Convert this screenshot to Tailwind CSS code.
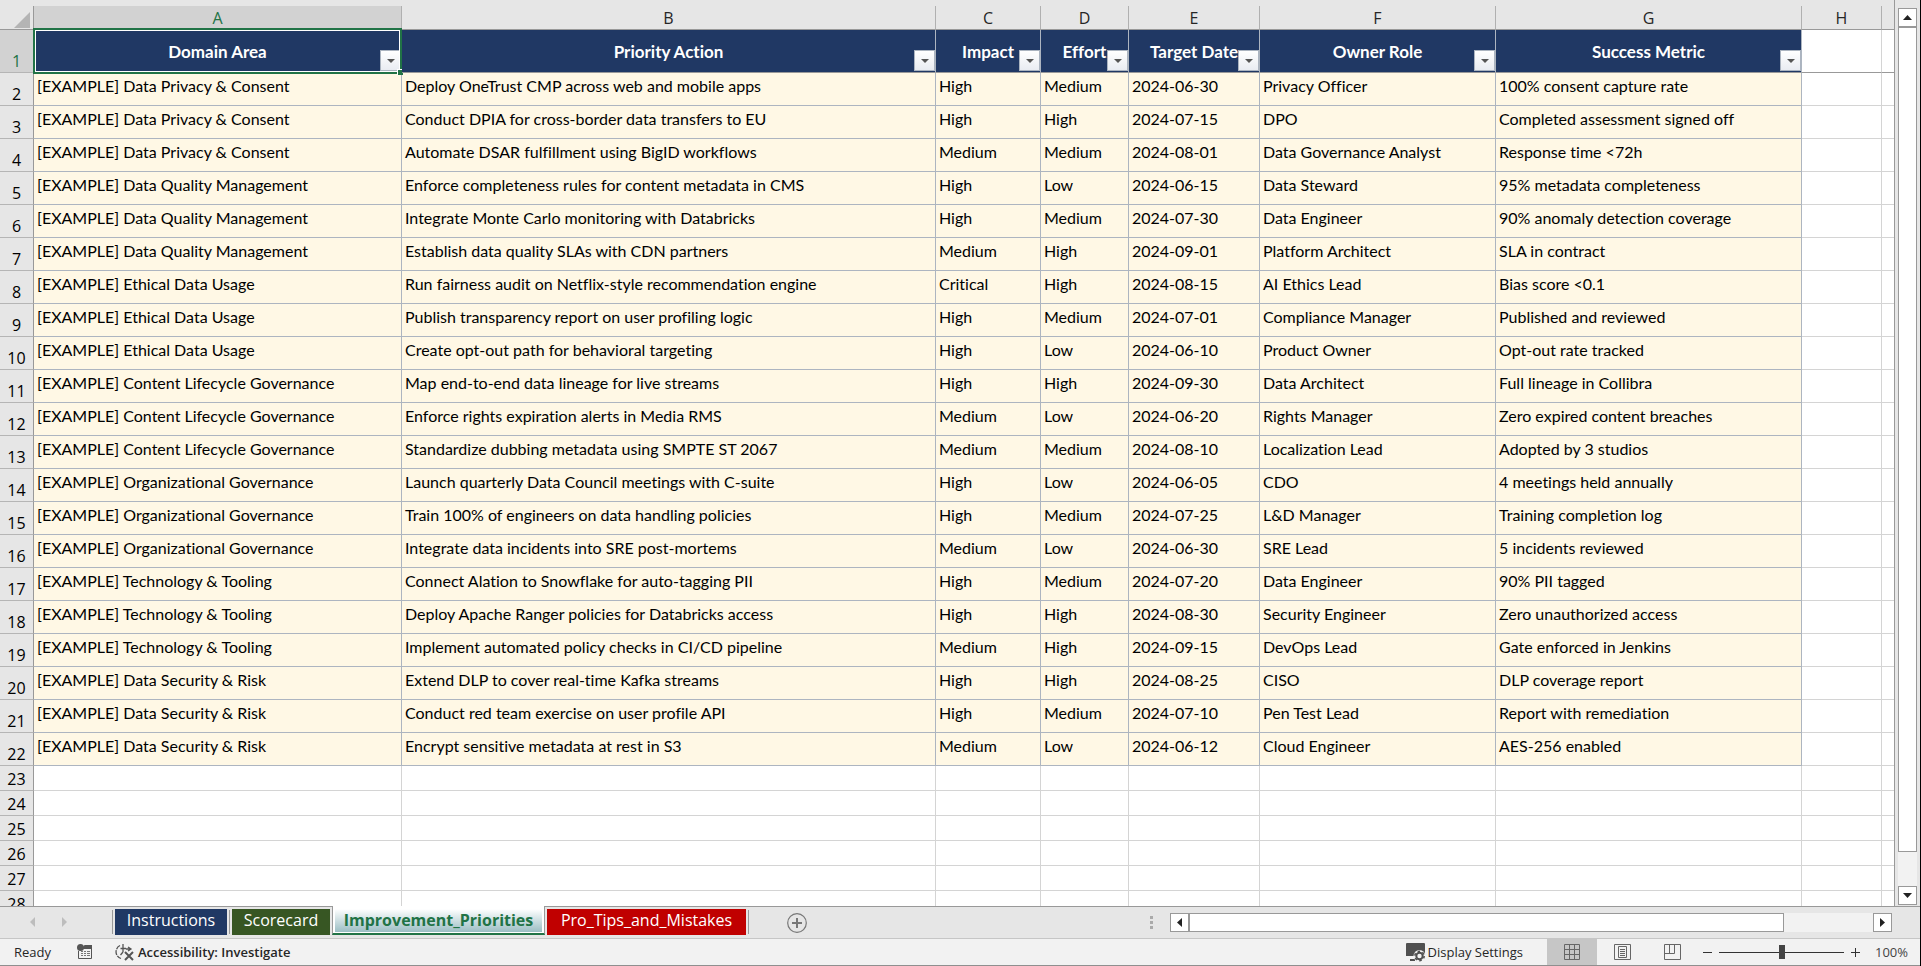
<!DOCTYPE html>
<html lang="en">
<head>
    <meta charset="UTF-8">
    <meta name="viewport" content="width=device-width, initial-scale=1.0">
    <title>Improvement Priorities</title>
    <script src="https://cdn.jsdelivr.net/npm/@tailwindcss/browser@4"></script>
</head>
<body class="h-screen flex flex-col overflow-hidden bg-[#e6e6e6] border-r border-black font-['Open_Sans',sans-serif] text-[#262626]">

    <!-- Sheet + vertical scrollbar -->
    <main class="flex-1 min-h-0 flex">
        <div class="flex-1 min-w-0 overflow-hidden pt-[6px] border-r border-[#999]">
            <table class="w-full table-fixed border-separate border-spacing-0 text-base leading-5">
                <colgroup>
                    <col class="w-[34px]">
                    <col class="w-[368px]">
                    <col class="w-[534px]">
                    <col class="w-[105px]">
                    <col class="w-[88px]">
                    <col class="w-[131px]">
                    <col class="w-[236px]">
                    <col class="w-[306px]">
                    <col class="w-[80px]">
                    <col>
                </colgroup>
                <thead id="columnLetters"></thead>
                <tbody id="sheetRows" class="font-['Lato',sans-serif] [font-variant-ligatures:none] text-black"></tbody>
            </table>
        </div>
        <div class="w-[25px] shrink-0 flex flex-col items-center pt-2 pb-px">
            <button aria-label="Scroll up" class="w-[19px] h-[19px] shrink-0 grid place-items-center bg-white border border-[#999]">
                <svg width="9" height="5" viewBox="0 0 9 5"><path d="M4.5 0 9 5H0z" fill="#222"/></svg>
            </button>
            <div class="flex-1 w-[19px] bg-[#f2f2f2]">
                <div class="h-[96%] bg-white border border-[#999]"></div>
            </div>
            <button aria-label="Scroll down" class="w-[19px] h-[19px] shrink-0 grid place-items-center bg-white border border-[#999]">
                <svg width="9" height="5" viewBox="0 0 9 5"><path d="M0 0h9L4.5 5z" fill="#222"/></svg>
            </button>
        </div>
    </main>

    <!-- Sheet tabs -->
    <div class="h-8 shrink-0 flex items-start">
        <nav class="h-8 flex items-start flex-1 border-t border-[#999] text-base leading-[22px]">
            <div class="w-28 h-[30px] flex items-center gap-[27px] pl-[30px]">
                <button aria-label="Previous sheet"><svg width="5" height="10" viewBox="0 0 5 10"><path d="M5 0v10L0 5z" fill="#bdbdbd"/></svg></button>
                <button aria-label="Next sheet"><svg width="5" height="10" viewBox="0 0 5 10"><path d="M0 0v10l5-5z" fill="#bdbdbd"/></svg></button>
            </div>
            <span class="w-px h-6 mt-[3px] bg-[#999]"></span>
            <a href="#" class="w-28 h-[26px] mt-[2px] ml-[2px] text-center text-white bg-[#203864]">Instructions</a>
            <span class="w-px h-6 mt-[3px] ml-[2px] bg-[#999]"></span>
            <a href="#" class="w-[98px] h-[26px] mt-[2px] ml-[2px] text-center text-white bg-[#375623]">Scorecard</a>
            <a href="#" class="w-[213px] h-[29px] -mt-px ml-[2px] px-[2px] pt-[3px] bg-white border-x border-x-[#999] border-b-2 border-b-[#217346] text-center font-bold text-[#217346]">
                <span class="block h-[23px] bg-linear-to-b from-white to-[#9bbec4]">Improvement_Priorities</span>
            </a>
            <a href="#" class="w-[199px] h-[26px] mt-[2px] ml-[2px] text-center text-white bg-[#c00000]">Pro_Tips_and_Mistakes</a>
            <span class="w-px h-6 mt-[3px] ml-[2px] bg-[#999]"></span>
            <button aria-label="New sheet" class="ml-[38px] mt-[6px]">
                <svg width="20" height="20" viewBox="0 0 20 20" fill="none" stroke="#777"><circle cx="10" cy="10" r="9.3" stroke-width="1.2"/><path d="M10 5v10M5 10h10" stroke-width="2"/></svg>
            </button>
        </nav>
        <div class="h-8 w-[770px] flex items-start border-t border-[#999]">
            <svg class="mt-[9px] mr-[17px]" width="3" height="13" viewBox="0 0 3 13" fill="#aaa"><path d="M0 0h3v3H0zM0 5h3v3H0zM0 10h3v3H0z"/></svg>
            <div class="flex-1 mt-[6px] flex">
                <button aria-label="Scroll left" class="w-[19px] h-[19px] grid place-items-center bg-white border border-[#999]">
                    <svg width="5" height="9" viewBox="0 0 5 9"><path d="M5 0v9L0 4.5z" fill="#222"/></svg>
                </button>
                <div class="flex-1 h-[19px] bg-[#f2f2f2]">
                    <div class="w-[87%] h-full bg-white border border-[#999]"></div>
                </div>
                <button aria-label="Scroll right" class="w-[19px] h-[19px] grid place-items-center bg-white border border-[#999]">
                    <svg width="5" height="9" viewBox="0 0 5 9"><path d="M0 0v9l5-4.5z" fill="#222"/></svg>
                </button>
            </div>
            <span class="w-7"></span>
        </div>
    </div>

    <!-- Status bar -->
    <footer class="h-7 shrink-0 flex items-center bg-[#f2f2f2] border-t border-[#c6c6c6] border-b border-b-[#8f8f8f] text-[13px] leading-5">
        <span class="w-[63px] ml-[14px]">Ready</span>
        <button aria-label="Record macro">
            <svg width="16" height="16" viewBox="0 0 16 16"><path d="M7.500 1H15v4H5z" fill="#555"/><path d="M1.500 7v7.500h13V4" fill="none" stroke="#555"/><path d="M4 7.500h2m1 0h2m1 0h3M4 9.500h2m1 0h2m1 0h3M4 11.500h2m1 0h2m1 0h3" stroke="#777"/><circle cx="3.500" cy="3.500" r="3.500" fill="#555"/></svg>
        </button>
        <button class="ml-[22px] flex items-center gap-1 font-semibold">
            <svg width="19" height="18" viewBox="0 0 19 18" fill="none" stroke="#555"><path d="M5 2.500A7 7 0 0 0 6 15.500" stroke-width="1.300" stroke-dasharray="5 1"/><path d="M5.500 5.500h5.500M8 1v8m0 0-2.500 3M13 4l3 2-3 2M11 6h4" stroke-width="1.300"/><path d="m10 9 8 8m0-8-8 8" stroke-width="2"/></svg>
            Accessibility: Investigate
        </button>
        <span class="flex-1"></span>
        <button class="flex items-center gap-[2px] mr-6">
            <svg width="20" height="19" viewBox="0 0 20 19"><path d="M1 0h17a1 1 0 0 1 1 1v12H0V1a1 1 0 0 1 1-1z" fill="#505050"/><path d="M4 17h5" stroke="#505050" stroke-width="2"/><circle cx="13.500" cy="13" r="6" fill="#f2f2f2"/><circle cx="13.500" cy="13" r="3.200" fill="none" stroke="#505050" stroke-width="2"/><circle cx="13.500" cy="13" r="4.700" fill="none" stroke="#505050" stroke-width="1.500" stroke-dasharray="2.500 2.420"/></svg>
            Display Settings
        </button>
        <button aria-label="Normal view" class="w-[50px] h-[26px] grid place-items-center bg-[#c6c6c6]">
            <svg width="16" height="16" viewBox="0 0 16 16" fill="none" stroke="#666"><path d="M.5.5h15v15H.5zM5.500.5v15M10.500.5v15M.5 5.500h15M.5 10.500h15"/></svg>
        </button>
        <button aria-label="Page layout" class="w-[50px] h-[26px] grid place-items-center">
            <svg width="17" height="16" viewBox="0 0 17 16" fill="none" stroke="#666"><path d="M.5.5h16v15H.5zM4.500 2.500h8v11h-8zM6 5.500h5M6 7.500h5M6 9.500h5M6 11.500h5"/></svg>
        </button>
        <button aria-label="Page break preview" class="w-[50px] h-[26px] grid place-items-center">
            <svg width="17" height="16" viewBox="0 0 17 16" fill="none" stroke="#666"><path d="M.5.5h16v15H.5zM.5 9.500h10v-9M5.500.5v9"/></svg>
        </button>
        <button aria-label="Zoom out" class="ml-[6px]"><svg width="9" height="9" viewBox="0 0 9 9"><path d="M0 4.500h9" stroke="#333"/></svg></button>
        <label class="w-[125px] h-[26px] mx-[7px] flex items-center">
            <input type="range" aria-label="Zoom" min="10" max="190" value="100" class="w-full h-px appearance-none bg-[#333] [&::-webkit-slider-thumb]:appearance-none [&::-webkit-slider-thumb]:w-[6px] [&::-webkit-slider-thumb]:h-[14px] [&::-webkit-slider-thumb]:bg-[#444]">
        </label>
        <button aria-label="Zoom in"><svg width="9" height="9" viewBox="0 0 9 9"><path d="M0 4.500h9M4.500 0v9" stroke="#333"/></svg></button>
        <span class="w-[60px] pr-3 text-right text-[#444]">100%</span>
    </footer>

    <script>
        const headings = ['Domain Area', 'Priority Action', 'Impact', 'Effort', 'Target Date', 'Owner Role', 'Success Metric'];

        const priorities = [
            ['Data Privacy & Consent', 'Deploy OneTrust CMP across web and mobile apps', 'High', 'Medium', '2024-06-30', 'Privacy Officer', '100% consent capture rate'],
            ['Data Privacy & Consent', 'Conduct DPIA for cross-border data transfers to EU', 'High', 'High', '2024-07-15', 'DPO', 'Completed assessment signed off'],
            ['Data Privacy & Consent', 'Automate DSAR fulfillment using BigID workflows', 'Medium', 'Medium', '2024-08-01', 'Data Governance Analyst', 'Response time <72h'],
            ['Data Quality Management', 'Enforce completeness rules for content metadata in CMS', 'High', 'Low', '2024-06-15', 'Data Steward', '95% metadata completeness'],
            ['Data Quality Management', 'Integrate Monte Carlo monitoring with Databricks', 'High', 'Medium', '2024-07-30', 'Data Engineer', '90% anomaly detection coverage'],
            ['Data Quality Management', 'Establish data quality SLAs with CDN partners', 'Medium', 'High', '2024-09-01', 'Platform Architect', 'SLA in contract'],
            ['Ethical Data Usage', 'Run fairness audit on Netflix-style recommendation engine', 'Critical', 'High', '2024-08-15', 'AI Ethics Lead', 'Bias score <0.1'],
            ['Ethical Data Usage', 'Publish transparency report on user profiling logic', 'High', 'Medium', '2024-07-01', 'Compliance Manager', 'Published and reviewed'],
            ['Ethical Data Usage', 'Create opt-out path for behavioral targeting', 'High', 'Low', '2024-06-10', 'Product Owner', 'Opt-out rate tracked'],
            ['Content Lifecycle Governance', 'Map end-to-end data lineage for live streams', 'High', 'High', '2024-09-30', 'Data Architect', 'Full lineage in Collibra'],
            ['Content Lifecycle Governance', 'Enforce rights expiration alerts in Media RMS', 'Medium', 'Low', '2024-06-20', 'Rights Manager', 'Zero expired content breaches'],
            ['Content Lifecycle Governance', 'Standardize dubbing metadata using SMPTE ST 2067', 'Medium', 'Medium', '2024-08-10', 'Localization Lead', 'Adopted by 3 studios'],
            ['Organizational Governance', 'Launch quarterly Data Council meetings with C-suite', 'High', 'Low', '2024-06-05', 'CDO', '4 meetings held annually'],
            ['Organizational Governance', 'Train 100% of engineers on data handling policies', 'High', 'Medium', '2024-07-25', 'L&D Manager', 'Training completion log'],
            ['Organizational Governance', 'Integrate data incidents into SRE post-mortems', 'Medium', 'Low', '2024-06-30', 'SRE Lead', '5 incidents reviewed'],
            ['Technology & Tooling', 'Connect Alation to Snowflake for auto-tagging PII', 'High', 'Medium', '2024-07-20', 'Data Engineer', '90% PII tagged'],
            ['Technology & Tooling', 'Deploy Apache Ranger policies for Databricks access', 'High', 'High', '2024-08-30', 'Security Engineer', 'Zero unauthorized access'],
            ['Technology & Tooling', 'Implement automated policy checks in CI/CD pipeline', 'Medium', 'High', '2024-09-15', 'DevOps Lead', 'Gate enforced in Jenkins'],
            ['Data Security & Risk', 'Extend DLP to cover real-time Kafka streams', 'High', 'High', '2024-08-25', 'CISO', 'DLP coverage report'],
            ['Data Security & Risk', 'Conduct red team exercise on user profile API', 'High', 'Medium', '2024-07-10', 'Pen Test Lead', 'Report with remediation'],
            ['Data Security & Risk', 'Encrypt sensitive metadata at rest in S3', 'Medium', 'Low', '2024-06-12', 'Cloud Engineer', 'AES-256 enabled']
        ];

        const escapeHtml = text => text.replace(/&/g, '&amp;').replace(/</g, '&lt;');

        const filterButton = label => `
            <button aria-label="Filter ${label}" class="absolute right-0 bottom-[1px] w-[21px] h-[21px] grid place-items-center bg-linear-to-b from-white to-[#e9ecf2] border border-[#abb4c0]">
                <svg width="8" height="4" viewBox="0 0 8 4"><path d="M0 0h8L4 4z" fill="#555"/></svg>
            </button>`;

        // Green frame with a white inner line around the active cell
        const selection = `
            <div class="absolute -inset-x-px -top-[2px] -bottom-[2px] border-2 border-[#217346] pointer-events-none">
                <div class="h-full border border-white"></div>
                <div class="absolute -right-[3px] -bottom-[3px] w-[6px] h-[6px] bg-[#217346] border-l border-t border-white"></div>
            </div>`;

        const rowNumber = (number, active) => `
            <th scope="row" class="${active ? 'bg-[#d2d2d2] text-[#217346]' : 'bg-[#e6e6e6]'} p-0 pb-px align-bottom font-normal font-['Open_Sans',sans-serif] border-r border-r-[#999] border-b border-b-[#b5b5b5]">${number}</th>`;

        const emptyCells = count => '<td class="bg-white border-r border-b border-[#d4d4d4]"></td>'.repeat(count) + '<td class="bg-white border-b border-[#d4d4d4]"></td>';

        document.getElementById('columnLetters').innerHTML = `
            <tr class="h-6">
                <th class="p-0 border-r border-b border-[#999]">
                    <svg class="ml-[14px] mt-1" width="16" height="16" viewBox="0 0 16 16"><path d="M16 0v16H0z" fill="#b4b4b4"/></svg>
                </th>
                ${'ABCDEFGH'.split('').map(letter => `
                    <th scope="col" class="${letter === 'A' ? 'bg-[#d2d2d2] text-[#217346]' : ''} p-0 font-normal border-r border-r-[#b0b0b0] border-b border-b-[#999]">${letter}</th>
                `).join('')}
                <th class="border-b border-[#999]"></th>
            </tr>`;

        document.getElementById('sheetRows').innerHTML = `
            <tr class="h-[43px]">
                ${rowNumber(1, true)}
                ${headings.map((heading, index) => `
                    <th class="relative p-0 pt-[2px] bg-[#203864] text-white text-[17px] whitespace-nowrap font-bold border-r border-r-[#adb5c0] border-b border-b-[#999]">
                        ${heading}${filterButton(heading)}${index === 0 ? selection : ''}
                    </th>
                `).join('')}
                <td class="bg-white border-r border-r-[#d4d4d4] border-b border-b-[#999]"></td>
                <td class="bg-white border-b border-b-[#999]"></td>
            </tr>
            ${priorities.map((row, index) => `
                <tr class="h-[33px]">
                    ${rowNumber(index + 2, false)}
                    ${row.map((text, column) => `
                        <td class="p-0 pl-[3px] pt-[3px] align-top whitespace-nowrap bg-[#fff8e5] border-r border-b border-[#adb5c0]">${column === 0 ? '[EXAMPLE] ' : ''}${escapeHtml(text)}</td>
                    `).join('')}
                    ${emptyCells(1)}
                </tr>
            `).join('')}
            ${[23, 24, 25, 26, 27, 28].map(number => `
                <tr class="h-[25px]">${rowNumber(number, false)}${emptyCells(8)}</tr>
            `).join('')}`;
    </script>
</body>
</html>
